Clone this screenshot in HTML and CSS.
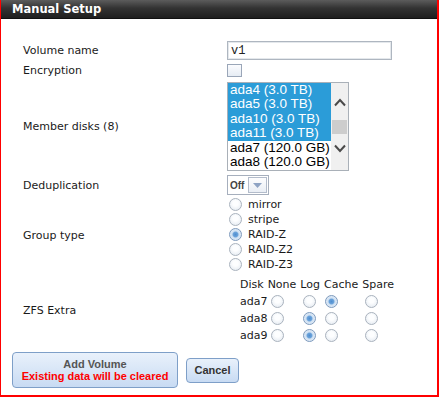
FILE: index.html
```html
<!DOCTYPE html>
<html lang="en">
<head>
    <meta charset="UTF-8">
    <title>Manual Setup</title>
    <link rel="stylesheet" href="styles.css">
</head>
<body>
    <div class="window">
        <div class="titlebar">Manual Setup</div>
        <form class="setup">
            <label class="lbl" for="volname">Volume name</label>
            <div class="field"><input type="text" id="volname" class="text" value="v1"></div>

            <label class="lbl">Encryption</label>
            <div class="field"><span class="check"></span></div>

            <label class="lbl">Member disks (8)</label>
            <div class="field">
                <div class="listbox">
                    <ul class="disks">
                        <li class="sel">ada4 (3.0 TB)</li>
                        <li class="sel">ada5 (3.0 TB)</li>
                        <li class="sel">ada10 (3.0 TB)</li>
                        <li class="sel">ada11 (3.0 TB)</li>
                        <li>ada7 (120.0 GB)</li>
                        <li>ada8 (120.0 GB)</li>
                    </ul>
                    <div class="scroll">
                        <svg class="chev up" width="12" height="9" viewBox="0 0 12 9"><polyline points="1,7.5 6,2 11,7.5" fill="none" stroke="#4a4a4a" stroke-width="2"/></svg>
                        <span class="thumb"></span>
                        <svg class="chev down" width="12" height="9" viewBox="0 0 12 9"><polyline points="1,1.5 6,7 11,1.5" fill="none" stroke="#4a4a4a" stroke-width="2"/></svg>
                    </div>
                </div>
            </div>

            <label class="lbl">Deduplication</label>
            <div class="field">
                <div class="combo">
                    <span class="combo-val">Off</span>
                    <span class="combo-btn"><svg width="9" height="5" viewBox="0 0 9 5"><polygon points="0,0 9,0 4.5,5" fill="#8ea3c4"/></svg></span>
                </div>
            </div>

            <label class="lbl">Group type</label>
            <div class="field radios">
                <label class="opt"><span class="radio"></span>mirror</label>
                <label class="opt"><span class="radio"></span>stripe</label>
                <label class="opt"><span class="radio on"></span>RAID-Z</label>
                <label class="opt"><span class="radio"></span>RAID-Z2</label>
                <label class="opt"><span class="radio"></span>RAID-Z3</label>
            </div>

            <label class="lbl">ZFS Extra</label>
            <div class="field">
                <table class="extra">
                    <tr><th>Disk</th><th>None</th><th>Log</th><th>Cache</th><th>Spare</th></tr>
                    <tr><td>ada7</td><td><span class="radio"></span></td><td><span class="radio"></span></td><td><span class="radio on"></span></td><td><span class="radio"></span></td></tr>
                    <tr><td>ada8</td><td><span class="radio"></span></td><td><span class="radio on"></span></td><td><span class="radio"></span></td><td><span class="radio"></span></td></tr>
                    <tr><td>ada9</td><td><span class="radio"></span></td><td><span class="radio on"></span></td><td><span class="radio"></span></td><td><span class="radio"></span></td></tr>
                </table>
            </div>
        </form>
        <div class="actions">
            <button type="button" class="btn add">Add Volume<span class="warn">Existing data will be cleared</span></button>
            <button type="button" class="btn cancel">Cancel</button>
        </div>
    </div>
</body>
</html>
```

FILE: styles.css
```css
body {
    margin: 0;
    font-family: 'DejaVu Sans', Verdana, sans-serif;
    font-size: 11px;
    color: #1a1a1a;
    background-color: #fff;
}
.window {
    width: 436px;
    height: 395px;
    border-left: 1px solid #f00;
    border-right: 2px solid #f00;
    border-bottom: 2px solid #f00;
    background-color: #fff;
}
.titlebar {
    height: 19px;
    line-height: 18px;
    padding-left: 11px;
    color: #fff;
    font-weight: bold;
    font-size: 11.5px;
    background: linear-gradient(#5c5c5c, #333 45%, #1f1f1f);
    border-bottom: 1px solid #111;
    box-sizing: border-box;
}
.setup {
    display: grid;
    grid-template-columns: 204px 1fr;
    row-gap: 4px;
    align-items: center;
    padding: 22px 0 0 22px;
}
.field {
    display: flex;
    align-items: center;
}
.text {
    width: 165px;
    height: 19px;
    box-sizing: border-box;
    border: 1px solid #aeb6c0;
    box-shadow: inset 0 0 0 1px #e4e8ec;
    padding: 0 3px;
    font-family: 'Liberation Mono', monospace;
    font-size: 12px;
    color: #222;
    margin: 0;
}
.check {
    width: 15px;
    height: 13px;
    box-sizing: border-box;
    border: 1px solid #9aa6b8;
    background: linear-gradient(#fbfcfe, #e6ecf4);
}
.listbox {
    display: flex;
    width: 122px;
    height: 89px;
    box-sizing: border-box;
    border: 1px solid #a9b0b8;
    margin-top: 1px;
    overflow: hidden;
}
.disks {
    list-style: none;
    margin: 0;
    padding: 0;
    flex: 1;
    font-family: 'Liberation Sans', Arial, sans-serif;
    font-size: 13.5px;
}
.disks li {
    height: 14.4px;
    line-height: 14.4px;
    padding-left: 2px;
    white-space: nowrap;
    color: #000;
}
.disks li.sel {
    background-color: #2b9cd8;
    color: #fff;
}
.scroll {
    width: 17px;
    background-color: #f0f0f0;
    display: flex;
    flex-direction: column;
    align-items: center;
    padding-top: 15px;
}
.chev {
    display: block;
}
.thumb {
    width: 15px;
    height: 14px;
    background-color: #cdcdcd;
    margin: 13px 0 10px;
}
.combo {
    display: flex;
    align-items: center;
    width: 42px;
    height: 20px;
    box-sizing: border-box;
    border: 1px solid #a6afbd;
    padding: 0 1px 0 2px;
}
.combo-val {
    flex: 1;
    font-family: 'Liberation Sans', Arial, sans-serif;
    font-weight: bold;
    font-size: 10px;
    color: #444;
}
.combo-btn {
    width: 19px;
    height: 16px;
    box-sizing: border-box;
    border: 1px solid #b3bccb;
    background: linear-gradient(#fdfdfe, #e9eef5);
    display: flex;
    align-items: center;
    justify-content: center;
}
.radios {
    flex-direction: column;
    align-items: flex-start;
    margin-top: -2px;
}
.opt {
    display: flex;
    align-items: center;
    height: 15px;
    padding-left: 2px;
}
.radio {
    display: inline-block;
    width: 13px;
    height: 13px;
    box-sizing: border-box;
    border-radius: 50%;
    border: 1px solid #aab3be;
    background: radial-gradient(circle at 50% 40%, #fdfeff 30%, #dfe6ee 100%);
    vertical-align: middle;
}
.opt .radio {
    margin-right: 6px;
}
.radio.on {
    border-color: #7f9bbd;
    background: radial-gradient(circle, #4f8ed0 0, #6aa2da 30%, #cfe0f2 45%, #eef4fa 100%);
}
.extra {
    border-collapse: collapse;
    margin-left: 13px;
}
.extra th, .extra td {
    padding: 0;
    height: 17px;
    text-align: left;
    font-weight: normal;
    vertical-align: middle;
}
.extra th {
    padding-right: 4px;
}
.extra td .radio {
    margin-left: 3px;
}
.extra td:nth-child(4) .radio {
    margin-left: 1px;
}
.actions {
    display: flex;
    align-items: center;
    padding: 8px 0 0 11px;
}
.btn {
    font-family: 'Liberation Sans', Arial, sans-serif;
    font-weight: bold;
    font-size: 11px;
    border: 1px solid #7e9fc8;
    border-radius: 4px;
    background: linear-gradient(#e9f1fb, #c8dbf3);
    padding: 0;
    margin: 0;
    cursor: pointer;
}
.add {
    width: 166px;
    height: 36px;
    color: #555;
    line-height: 12px;
    display: flex;
    flex-direction: column;
    align-items: center;
    justify-content: center;
}
.warn {
    color: #f00;
}
.cancel {
    width: 53px;
    height: 25px;
    margin-left: 8px;
    color: #333;
}
```
